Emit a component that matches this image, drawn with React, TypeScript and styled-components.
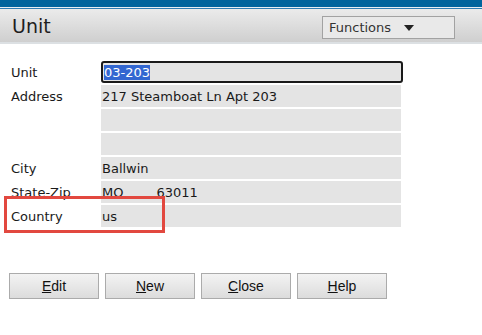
import React from "react";
import styled, { createGlobalStyle, css } from "styled-components";

const Global = createGlobalStyle`
  html, body { margin: 0; padding: 0; background: #fff; }
  body { font-family: "DejaVu Sans", Verdana, sans-serif; color: #1a1a1a; }
`;

const Page = styled.div`
  width: 482px;
  height: 335px;
  display: flex;
  flex-direction: column;
  overflow: hidden;
`;

const TopBar = styled.div`
  height: 7px;
  background: #00649d;
  border-bottom: 1px solid #e8eef3;
`;

const Header = styled.div`
  height: 33px;
  border-top: 1px solid #2f7db3;
  border-bottom: 2px solid #dce0e3;
  background: linear-gradient(#ebebeb, #cfcfcf);
  display: flex;
  align-items: center;
  justify-content: space-between;
  padding: 0 27px 0 12px;
`;

const Title = styled.h1`
  margin: 0;
  font-size: 19px;
  font-weight: normal;
  color: #1e1e1e;
  line-height: 1;
  padding-top: 2px;
`;

const Menu = styled.div`
  width: 133px;
  height: 23px;
  margin-top: 4px;
  border: 1px solid #a2a2a2;
  background: #e9e9e9;
  display: flex;
  align-items: center;
  padding-left: 6px;
  gap: 13px;
  font-size: 13px;
  color: #333;
  box-sizing: border-box;
`;

const Form = styled.div`
  padding-top: 17px;
  display: flex;
  flex-direction: column;
  gap: 2px;
`;

const FieldRow = styled.div<{ $highlight?: boolean }>`
  position: relative;
  display: flex;
  align-items: center;
  height: 22px;
  padding-left: 11px;
  font-size: 13px;
  ${(p) =>
    p.$highlight &&
    css`
      &::after {
        content: "";
        position: absolute;
        left: 4px;
        top: -9px;
        width: 155px;
        height: 31px;
        border: 3px solid #e2483f;
      }
    `}
`;

const Label = styled.div`
  width: 90px;
`;

const Value = styled.div<{ $focused?: boolean }>`
  width: 300px;
  height: 22px;
  box-sizing: border-box;
  background: #e4e4e4;
  display: flex;
  align-items: center;
  padding-left: 1px;
  ${(p) =>
    p.$focused &&
    css`
      width: 302px;
      border: 2px solid #1a1a1a;
      border-radius: 3px;
      padding-left: 1px;
    `}
`;

const Selected = styled.span`
  background: #3367d1;
  color: #fff;
`;

const Zip = styled.span`
  margin-left: 33px;
`;

const Buttons = styled.div`
  margin-top: 46px;
  padding-left: 9px;
  display: flex;
  gap: 6px;
`;

const Button = styled.button`
  width: 90px;
  height: 26px;
  border: 1px solid #ababab;
  background: linear-gradient(#f3f3f3, #dcdcdc);
  font-family: "Liberation Sans", Arial, sans-serif;
  font-size: 14px;
  color: #111;
  padding: 0;
  u { text-decoration: underline; }
`;

const Caret = () => (
  <svg width="10" height="6" viewBox="0 0 10 6">
    <path d="M0 0H10L5 6Z" fill="#222" />
  </svg>
);

export default function App() {
  return (
    <Page>
      <Global />
      <TopBar />
      <Header>
        <Title>Unit</Title>
        <Menu>
          Functions <Caret />
        </Menu>
      </Header>
      <Form>
        <FieldRow>
          <Label>Unit</Label>
          <Value $focused>
            <Selected>03-203</Selected>
          </Value>
        </FieldRow>
        <FieldRow>
          <Label>Address</Label>
          <Value>217 Steamboat Ln Apt 203</Value>
        </FieldRow>
        <FieldRow>
          <Label />
          <Value />
        </FieldRow>
        <FieldRow>
          <Label />
          <Value />
        </FieldRow>
        <FieldRow>
          <Label>City</Label>
          <Value>Ballwin</Value>
        </FieldRow>
        <FieldRow>
          <Label>State-Zip</Label>
          <Value>
            MO<Zip>63011</Zip>
          </Value>
        </FieldRow>
        <FieldRow $highlight>
          <Label>Country</Label>
          <Value>us</Value>
        </FieldRow>
      </Form>
      <Buttons>
        <Button><u>E</u>dit</Button>
        <Button><u>N</u>ew</Button>
        <Button><u>C</u>lose</Button>
        <Button><u>H</u>elp</Button>
      </Buttons>
    </Page>
  );
}
